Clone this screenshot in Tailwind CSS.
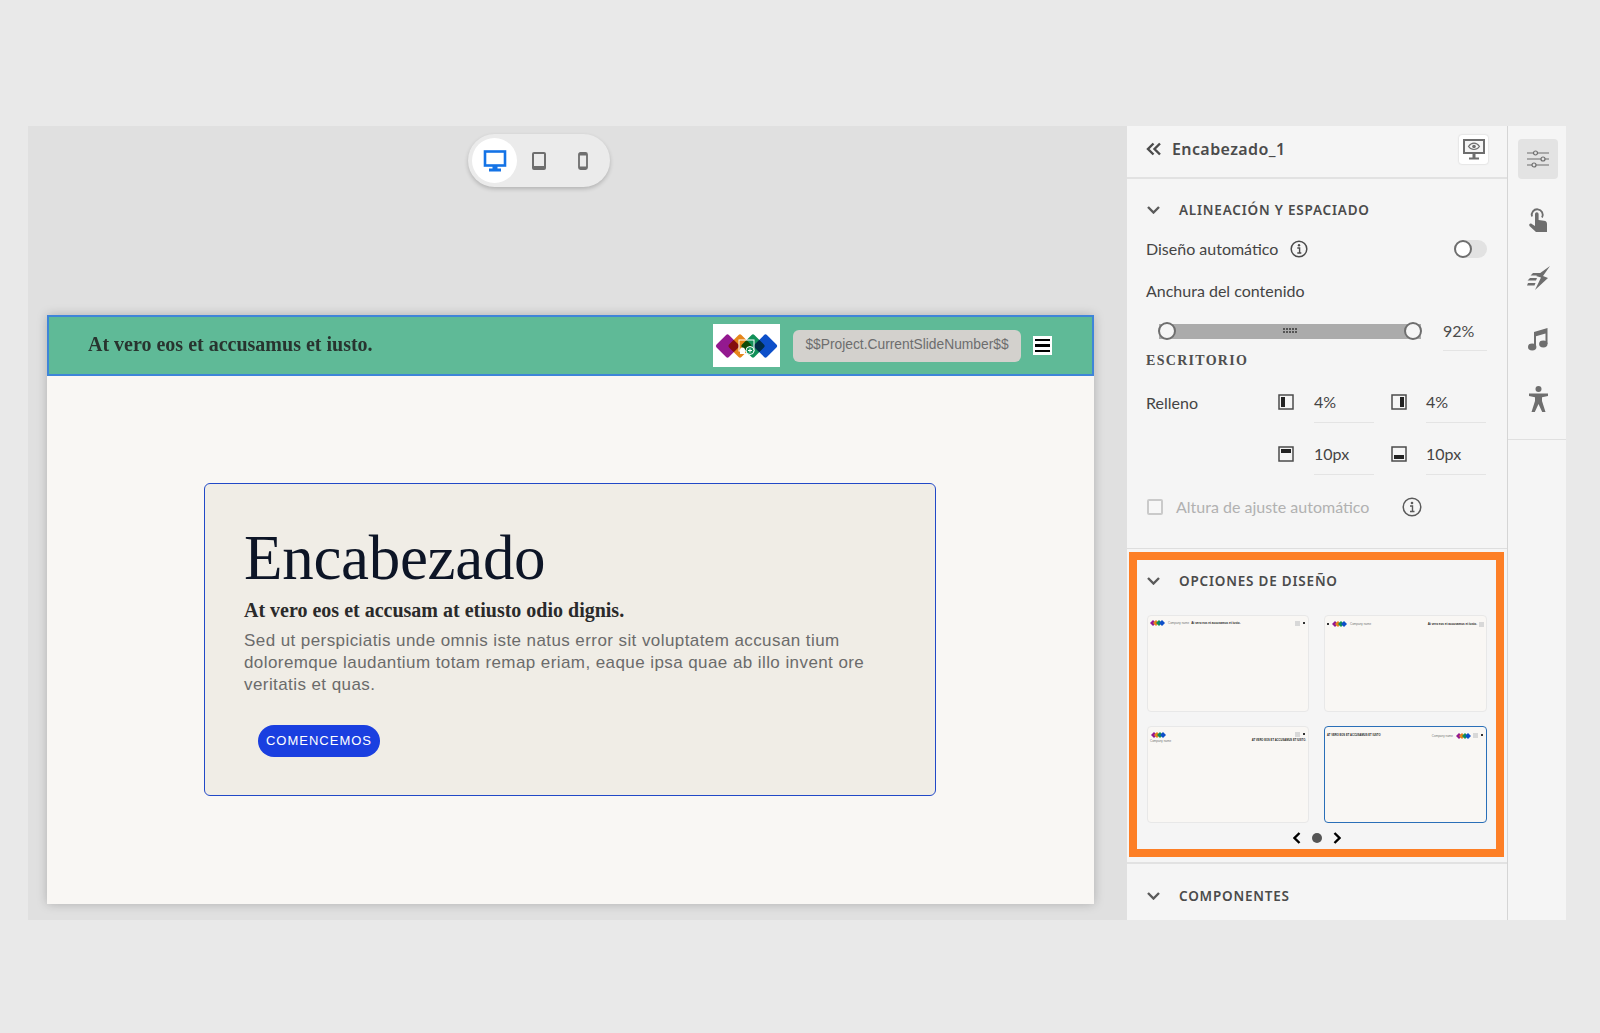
<!DOCTYPE html>
<html lang="es">
<head>
    <meta charset="UTF-8">
    <title>Encabezado_1</title>
    <script src="https://cdn.jsdelivr.net/npm/@tailwindcss/browser@4"></script>
</head>
<body class="bg-[#e9e9e9] h-[1033px] overflow-hidden pt-[126px] pl-[28px] font-['Lato','Noto_Sans',sans-serif]">
    <div class="flex w-[1539px] h-[794px] overflow-hidden">

        <!-- lienzo -->
        <div class="w-[1099px] shrink-0 bg-[#e0e0e0] flex flex-col">
            <div class="ml-[440px] mt-[8px] w-[142px] h-[53px] rounded-full bg-[#ebebeb] shadow-[0_2px_4px_rgba(0,0,0,0.2)] flex items-center pl-[4px]">
                <div class="w-[45px] h-[45px] rounded-full bg-white flex items-center justify-center">
                    <svg width="24" height="24" viewBox="0 0 24 24"><rect x="2" y="2.5" width="20" height="14" fill="none" stroke="#1473e6" stroke-width="2.6"/><rect x="9.5" y="17" width="5" height="3" fill="#1473e6"/><rect x="6" y="19.5" width="12" height="3" fill="#1473e6"/></svg>
                </div>
                <div class="w-[44px] flex justify-center">
                    <svg width="16" height="18" viewBox="0 0 16 18"><rect x="2" y="1" width="12" height="16" rx="1" fill="none" stroke="#6e6e6e" stroke-width="2"/><rect x="2" y="14" width="12" height="3" fill="#6e6e6e"/></svg>
                </div>
                <div class="w-[44px] flex justify-center">
                    <svg width="12" height="18" viewBox="0 0 12 18"><rect x="2" y="1" width="8" height="16" rx="1.5" fill="none" stroke="#6e6e6e" stroke-width="1.8"/><rect x="2" y="1" width="8" height="2.5" fill="#6e6e6e"/><rect x="2" y="14.5" width="8" height="2.5" fill="#6e6e6e"/></svg>
                </div>
            </div>

            <!-- diapositiva -->
            <div class="mt-[128px] ml-[19px] w-[1047px] h-[589px] bg-[#f9f7f4] shadow-[0_0_10px_rgba(0,0,0,0.22)] flex flex-col">
                <div class="h-[61px] shrink-0 bg-[#5fba97] border-2 border-[#3f85d8] flex items-center pl-[39px]">
                    <div class="w-[625px] pb-[3px] font-['Liberation_Serif',serif] font-bold text-[20px] text-[#28342f]">At vero eos et accusamus et iusto.</div>
                    <div class="w-[67px] h-[43px] bg-white flex items-center justify-center">
                        <svg width="63" height="28" viewBox="0 0 63 28">
                            <g style="mix-blend-mode:multiply"><rect x="3.750" y="5.250" width="17.500" height="17.500" rx="2" transform="rotate(45 12.500 14)" fill="#93198f"/></g>
                            <g style="mix-blend-mode:multiply"><rect x="16.250" y="5.250" width="17.500" height="17.500" rx="2" transform="rotate(45 25 14)" fill="#e6861a"/></g>
                            <g style="mix-blend-mode:multiply"><rect x="29.250" y="5.250" width="17.500" height="17.500" rx="2" transform="rotate(45 38 14)" fill="#119058"/></g>
                            <g style="mix-blend-mode:multiply"><rect x="41.750" y="5.250" width="17.500" height="17.500" rx="2" transform="rotate(45 50.500 14)" fill="#0d4fc9"/></g>
                            <rect x="24" y="8" width="15" height="11" fill="none" stroke="#fff" stroke-width="1"/>
                            <circle cx="35" cy="18.500" r="4" fill="#119058" stroke="#fff"/>
                            <path d="M33 18.500h4M35 16.500v4" stroke="#fff" stroke-width="1"/>
                            <path d="M25 22v-4a2 2 0 0 1 5 0v4z" fill="#fff"/>
                        </svg>
                    </div>
                    <div class="ml-[13px] w-[228px] h-[32px] rounded-[6px] bg-[#d3d1cd] flex items-center justify-center font-['Liberation_Sans',sans-serif] text-[13.800px] text-[#6d6d6d]">$$Project.CurrentSlideNumber$$</div>
                    <div class="ml-[12px] w-[19px] h-[19px] bg-white flex flex-col justify-center gap-[3px] px-[2px]">
                        <div class="h-[2.500px] bg-black"></div>
                        <div class="h-[2.500px] bg-black"></div>
                        <div class="h-[2.500px] bg-black"></div>
                    </div>
                </div>
                <div class="flex-1 flex items-center justify-center pb-[2px] pr-[1px]">
                    <div class="w-[732px] h-[313px] bg-[#f0ede6] border border-[#2249c7] rounded-[6px] pl-[39px] pt-[38px]">
                        <div class="font-['Liberation_Serif',serif] text-[63px] leading-[72px] -tracking-[0.3px] text-[#0d1526]">Encabezado</div>
                        <div class="mt-[3px] font-['Liberation_Serif',serif] font-bold text-[20px] leading-[26px] text-[#2a2a2a]">At vero eos et accusam at etiusto odio dignis.</div>
                        <div class="mt-[7px] w-[660px] font-['Liberation_Sans',sans-serif] text-[17px] leading-[22px] tracking-[0.42px] text-[#6b6b6b]">Sed ut perspiciatis unde omnis iste natus error sit voluptatem accusan tium doloremque laudantium totam remap eriam, eaque ipsa quae ab illo invent ore veritatis et quas.</div>
                        <div class="mt-[29px] ml-[14px] w-[122px] h-[32px] rounded-full bg-[#1a3fe0] flex items-center justify-center font-['Liberation_Sans',sans-serif] font-medium text-[13px] tracking-[1px] text-white">COMENCEMOS</div>
                    </div>
                </div>
            </div>
        </div>

        <!-- panel de propiedades -->
        <div class="w-[381px] shrink-0 bg-[#f5f5f5] border-r border-[#d5d5d5] text-[#4b4b4b] flex flex-col">
            <div class="h-[53px] shrink-0 border-b-2 border-[#e2e2e2] flex items-center pl-[19px] pr-[19px] pb-[5px]">
                <svg width="16" height="14" viewBox="0 0 16 14"><path d="M7.500 1.500 2 7l5.500 5.500M14 1.500 8.500 7l5.500 5.500" fill="none" stroke="#4b4b4b" stroke-width="2.400"/></svg>
                <div class="ml-[10px] flex-1 font-['Noto_Sans',sans-serif] font-semibold text-[16px] tracking-[0.4px]">Encabezado_1</div>
                <div class="w-[29px] h-[29px] rounded-[3px] bg-white shadow-[0_0_2px_rgba(0,0,0,0.2)] flex items-center justify-center">
                    <svg width="24" height="24" viewBox="0 0 24 24"><rect x="1" y="2" width="22" height="15" fill="#6e6e6e"/><rect x="3" y="4" width="18" height="11" fill="#f5f5f5"/><path d="M6.500 9.500c3-4.500 8-4.500 11 0-3 4-8 4-11 0z" fill="none" stroke="#6e6e6e" stroke-width="1.200"/><circle cx="12" cy="9.500" r="1.800" fill="#6e6e6e"/><rect x="10.500" y="17" width="3" height="4" fill="#6e6e6e"/><rect x="7" y="20.500" width="10" height="2" fill="#6e6e6e"/></svg>
                </div>
            </div>

            <div class="h-[370px] shrink-0 border-b border-[#dedede] pl-[19px] pr-[20px]">
                <div class="h-[30px] mt-[16px] flex items-center">
                    <svg width="13" height="8" viewBox="0 0 13 8" class="ml-[1px]"><path d="M1 1 6.500 6.500 12 1" fill="none" stroke="#5a5a5a" stroke-width="2.400"/></svg>
                    <div class="ml-[19px] font-['Noto_Sans',sans-serif] font-semibold text-[13.500px] tracking-[0.8px]">ALINEACIÓN Y ESPACIADO</div>
                </div>
                <div class="h-[30px] mt-[9px] flex items-center text-[16px] text-[#444]">
                    <span>Diseño automático</span>
                    <svg class="ml-[12px]" width="18" height="18" viewBox="0 0 18 18"><circle cx="9" cy="9" r="7.800" fill="none" stroke="#4b4b4b" stroke-width="1.500"/><circle cx="9" cy="5.300" r="1.200" fill="#4b4b4b"/><path d="M7.300 8h2.300v4.500M7.300 13h4" fill="none" stroke="#4b4b4b" stroke-width="1.400"/></svg>
                    <div class="ml-auto w-[33px] h-[18px] rounded-full bg-[#e2e2e2] flex items-center">
                        <div class="w-[18px] h-[18px] rounded-full bg-white border-2 border-[#6e6e6e]"></div>
                    </div>
                </div>
                <div class="h-[24px] mt-[15px] flex items-center text-[16px] text-[#444]">Anchura del contenido</div>

                <div class="mt-[18px] h-[20px] flex items-center">
                    <div class="ml-[13px] w-[262px] h-[15px] bg-[#ababab] relative flex items-center justify-center">
                        <div class="absolute -left-[1px] -top-[1.500px] w-[18px] h-[18px] rounded-full bg-[#f5f5f5] border-2 border-[#6e6e6e]"></div>
                        <div class="absolute -right-[1px] -top-[1.500px] w-[18px] h-[18px] rounded-full bg-[#f5f5f5] border-2 border-[#6e6e6e]"></div>
                        <svg width="14" height="6" viewBox="0 0 14 6" class="fill-[#555]"><rect x="0" y="0" width="2" height="2"/><rect x="3" y="0" width="2" height="2"/><rect x="6" y="0" width="2" height="2"/><rect x="9" y="0" width="2" height="2"/><rect x="12" y="0" width="2" height="2"/><rect x="0" y="3" width="2" height="2"/><rect x="3" y="3" width="2" height="2"/><rect x="6" y="3" width="2" height="2"/><rect x="9" y="3" width="2" height="2"/><rect x="12" y="3" width="2" height="2"/></svg>
                    </div>
                    <div class="ml-[22px] w-[44px] h-[30px] self-start leading-[20px] border-b border-[#e4e4e4] text-[16px]">92%</div>
                </div>
                <div class="mt-[9px] font-['Liberation_Serif',serif] font-bold text-[14px] tracking-[1.300px] text-[#4f4f4f]">ESCRITORIO</div>

                <div class="mt-[14px] grid grid-cols-[132px_36px_60px_17px_35px_60px] text-[16px] text-[#444]">
                    <div class="h-[38px] pt-[6px]">Relleno</div>
                    <div class="h-[38px] pt-[9px]">
                        <svg width="16" height="16" viewBox="0 0 16 16"><rect x="1" y="1" width="14" height="14" fill="none" stroke="#4b4b4b" stroke-width="1.500"/><rect x="3" y="3" width="4" height="10" fill="#222"/></svg>
                    </div>
                    <div class="h-[38px] pt-[5px] border-b border-[#e4e4e4]">4%</div>
                    <div></div>
                    <div class="h-[38px] pt-[9px]">
                        <svg width="16" height="16" viewBox="0 0 16 16"><rect x="1" y="1" width="14" height="14" fill="none" stroke="#4b4b4b" stroke-width="1.500"/><rect x="9" y="3" width="4" height="10" fill="#222"/></svg>
                    </div>
                    <div class="h-[38px] pt-[5px] border-b border-[#e4e4e4]">4%</div>
                </div>
                <div class="mt-[14px] grid grid-cols-[132px_36px_60px_17px_35px_60px] text-[16px] text-[#444]">
                    <div></div>
                    <div class="h-[38px] pt-[9px]">
                        <svg width="16" height="16" viewBox="0 0 16 16"><rect x="1" y="1" width="14" height="14" fill="none" stroke="#4b4b4b" stroke-width="1.500"/><rect x="3" y="3" width="10" height="4" fill="#222"/></svg>
                    </div>
                    <div class="h-[38px] pt-[5px] border-b border-[#e4e4e4]">10px</div>
                    <div></div>
                    <div class="h-[38px] pt-[9px]">
                        <svg width="16" height="16" viewBox="0 0 16 16"><rect x="1" y="1" width="14" height="14" fill="none" stroke="#4b4b4b" stroke-width="1.500"/><rect x="3" y="9" width="10" height="4" fill="#222"/></svg>
                    </div>
                    <div class="h-[38px] pt-[5px] border-b border-[#e4e4e4]">10px</div>
                </div>
                <div class="mt-[20px] h-[24px] flex items-center text-[16px] text-[#b1b1b1]">
                    <div class="ml-[1px] w-[16px] h-[16px] border-2 border-[#cacaca] rounded-[2px] bg-[#f7f7f7]"></div>
                    <span class="ml-[13px]">Altura de ajuste automático</span>
                    <svg class="ml-[33px]" width="20" height="20" viewBox="0 0 20 20"><circle cx="10" cy="10" r="8.800" fill="none" stroke="#5a5a5a" stroke-width="1.500"/><circle cx="10" cy="6" r="1.300" fill="#5a5a5a"/><path d="M8 9h2.500v5M8 14.500h4.500" fill="none" stroke="#5a5a5a" stroke-width="1.400"/></svg>
                </div>
            </div>

            <!-- opciones de diseño -->
            <div class="mt-[3px] ml-[2px] w-[375px] h-[305px] shrink-0 border-[8px] border-[#fd7f26] bg-[#f5f5f5] pl-[10px]">
                <div class="h-[36px] mt-[3px] flex items-center">
                    <svg width="13" height="8" viewBox="0 0 13 8"><path d="M1 1 6.500 6.500 12 1" fill="none" stroke="#5a5a5a" stroke-width="2.400"/></svg>
                    <div class="ml-[19px] font-['Noto_Sans',sans-serif] font-semibold text-[13.500px] tracking-[0.8px]">OPCIONES DE DISEÑO</div>
                </div>
                <div class="mt-[16px] grid grid-cols-[162px_163px] gap-x-[15px] gap-y-[14px] text-[3px] font-semibold text-[#222] font-['Liberation_Sans',sans-serif]">
                    <div class="h-[97px] bg-[#f9f7f4] border border-[#e8e8e8] rounded-[4px] flex items-start pt-[4px] px-[2px] whitespace-nowrap">
                        <svg width="15" height="6" viewBox="0 0 15 6"><path d="M3 0l3 3-3 3-3-3z" fill="#93198f"/><path d="M6 0l3 3-3 3-3-3z" fill="#e6861a"/><path d="M9 0l3 3-3 3-3-3z" fill="#119058"/><path d="M12 0l3 3-3 3-3-3z" fill="#0d4fc9"/></svg>
                        <span class="ml-[3px] mt-[1px] text-[#777] font-normal">Company name</span>
                        <span class="ml-[2px] mt-[1px]">At vero eos et accusamus et iusto.</span>
                        <div class="ml-auto w-[5px] h-[5px] bg-[#d8d8d8] mt-[1px]"></div>
                        <div class="ml-[3px] mr-[1px] w-[2px] h-[2px] bg-[#333] mt-[2px]"></div>
                    </div>
                    <div class="h-[97px] bg-[#f9f7f4] border border-[#e8e8e8] rounded-[4px] flex items-start pt-[5px] px-[2px] whitespace-nowrap">
                        <div class="w-[2px] h-[2px] bg-[#333] mt-[2px] mr-[3px]"></div>
                        <svg width="15" height="6" viewBox="0 0 15 6"><path d="M3 0l3 3-3 3-3-3z" fill="#93198f"/><path d="M6 0l3 3-3 3-3-3z" fill="#e6861a"/><path d="M9 0l3 3-3 3-3-3z" fill="#119058"/><path d="M12 0l3 3-3 3-3-3z" fill="#0d4fc9"/></svg>
                        <span class="ml-[3px] mt-[1px] text-[#777] font-normal">Company name</span>
                        <span class="ml-auto mt-[1px]">At vero eos et accusamus et iusto.</span>
                        <div class="ml-[2px] w-[5px] h-[5px] bg-[#d8d8d8] mt-[1px]"></div>
                    </div>
                    <div class="h-[97px] bg-[#f9f7f4] border border-[#e8e8e8] rounded-[4px] pt-[5px] px-[2px] whitespace-nowrap">
                        <div class="flex items-start">
                            <svg class="ml-[1px]" width="15" height="6" viewBox="0 0 15 6"><path d="M3 0l3 3-3 3-3-3z" fill="#93198f"/><path d="M6 0l3 3-3 3-3-3z" fill="#e6861a"/><path d="M9 0l3 3-3 3-3-3z" fill="#119058"/><path d="M12 0l3 3-3 3-3-3z" fill="#0d4fc9"/></svg>
                            <div class="ml-auto w-[5px] h-[5px] bg-[#d8d8d8]"></div>
                            <div class="ml-[3px] mr-[1px] w-[2px] h-[2px] bg-[#333] mt-[1px]"></div>
                        </div>
                        <div class="flex mt-[1px]">
                            <span class="text-[#777] font-normal">Company name</span>
                            <span class="ml-auto text-[2.700px]">AT VERO EOS ET ACCUSAMUS ET IUSTO.</span>
                        </div>
                    </div>
                    <div class="h-[97px] bg-[#f9f7f4] border border-[#2a6fb8] rounded-[4px] flex items-start pt-[6px] px-[2px] whitespace-nowrap">
                        <span class="mt-[1px] text-[2.700px]">AT VERO EOS ET ACCUSAMUS ET IUSTO</span>
                        <span class="ml-auto mt-[1px] text-[#777] font-normal">Company name</span>
                        <svg class="ml-[3px]" width="15" height="6" viewBox="0 0 15 6"><path d="M3 0l3 3-3 3-3-3z" fill="#93198f"/><path d="M6 0l3 3-3 3-3-3z" fill="#e6861a"/><path d="M9 0l3 3-3 3-3-3z" fill="#119058"/><path d="M12 0l3 3-3 3-3-3z" fill="#0d4fc9"/></svg>
                        <div class="ml-[2px] w-[5px] h-[5px] bg-[#d8d8d8]"></div>
                        <div class="ml-[3px] mr-[1px] w-[2px] h-[2px] bg-[#333] mt-[1px]"></div>
                    </div>
                </div>
                <div class="mt-[7px] ml-[146px] w-[48px] h-[16px] flex items-center justify-between">
                    <svg width="8" height="12" viewBox="0 0 8 12"><path d="M6.500 1 1.500 6l5 5" fill="none" stroke="#000" stroke-width="2.400"/></svg>
                    <div class="w-[10px] h-[10px] rounded-full bg-[#555]"></div>
                    <svg width="8" height="12" viewBox="0 0 8 12"><path d="M1.500 1l5 5-5 5" fill="none" stroke="#000" stroke-width="2.400"/></svg>
                </div>
            </div>
            <div class="mt-[5px] h-[2px] shrink-0 bg-[#e2e2e2]"></div>
            <div class="h-[64px] shrink-0 flex items-center pl-[20px]">
                <svg width="13" height="8" viewBox="0 0 13 8"><path d="M1 1 6.500 6.500 12 1" fill="none" stroke="#5a5a5a" stroke-width="2.400"/></svg>
                <div class="ml-[19px] font-['Noto_Sans',sans-serif] font-semibold text-[13.500px] tracking-[0.8px]">COMPONENTES</div>
            </div>
        </div>

        <!-- barra lateral -->
        <div class="w-[58px] shrink-0 bg-[#f5f5f5]">
            <div class="h-[314px] border-b border-[#e0e0e0] pl-[10px] pt-[13px] flex flex-col">
                <div class="w-[40px] h-[40px] rounded-[4px] bg-[#e3e3e3] flex items-center justify-center">
                    <svg width="22" height="20" viewBox="0 0 22 20" fill="none" stroke="#6e6e6e" stroke-width="1.200"><path d="M0 4h6.500M10.500 4H22M0 10h14M18 10h4M0 16h5M9 16h13"/><circle cx="8.500" cy="4" r="2"/><circle cx="16" cy="10" r="2"/><circle cx="7" cy="16" r="2"/></svg>
                </div>
                <div class="w-[40px] h-[26px] mt-[28px] flex justify-center">
                    <svg width="20" height="26" viewBox="0 0 20 26"><path d="M4 9.500a5.500 5.500 0 1 1 10 1" fill="none" stroke="#6e6e6e" stroke-width="1.800"/><path d="M7 7a1.800 1.800 0 0 1 3.600 0v6l5.400.8c2 .3 3 1.400 3 3.200v8H8L1.500 19c-1-1.300.6-3.200 2.300-2L7 19z" fill="#6e6e6e"/></svg>
                </div>
                <div class="w-[40px] h-[24px] mt-[33px] flex justify-center">
                    <svg width="23" height="24" viewBox="0 0 23 24" class="fill-[#6e6e6e]"><path d="M23 0 9 10l5 1.500L8 24l13-12-5-2z"/><path d="M6 7h9l-3 2.500H3.500zM3 12h7l-1 2.500H0.500zM1 17h7.500l-1 2.500H0z"/></svg>
                </div>
                <div class="w-[40px] h-[24px] mt-[37px] flex justify-center">
                    <svg width="20" height="24" viewBox="0 0 20 24" class="fill-[#6e6e6e]"><path d="M6 5 19.500 1v16h-2V6.500L8 9.200V21H6z"/><ellipse cx="4.200" cy="20" rx="4.200" ry="3.400"/><ellipse cx="15.300" cy="17" rx="4.200" ry="3.400"/></svg>
                </div>
                <div class="w-[40px] h-[26px] mt-[35px] flex justify-center">
                    <svg width="19" height="26" viewBox="0 0 19 26" class="fill-[#6e6e6e]"><circle cx="9.500" cy="3" r="3"/><path d="M0 7.500h19V10l-6 1.200V15l3.500 11h-3.300L9.500 18 5.800 26H2.500L6 15v-3.800L0 10z"/></svg>
                </div>
            </div>
        </div>
    </div>
</body>
</html>
